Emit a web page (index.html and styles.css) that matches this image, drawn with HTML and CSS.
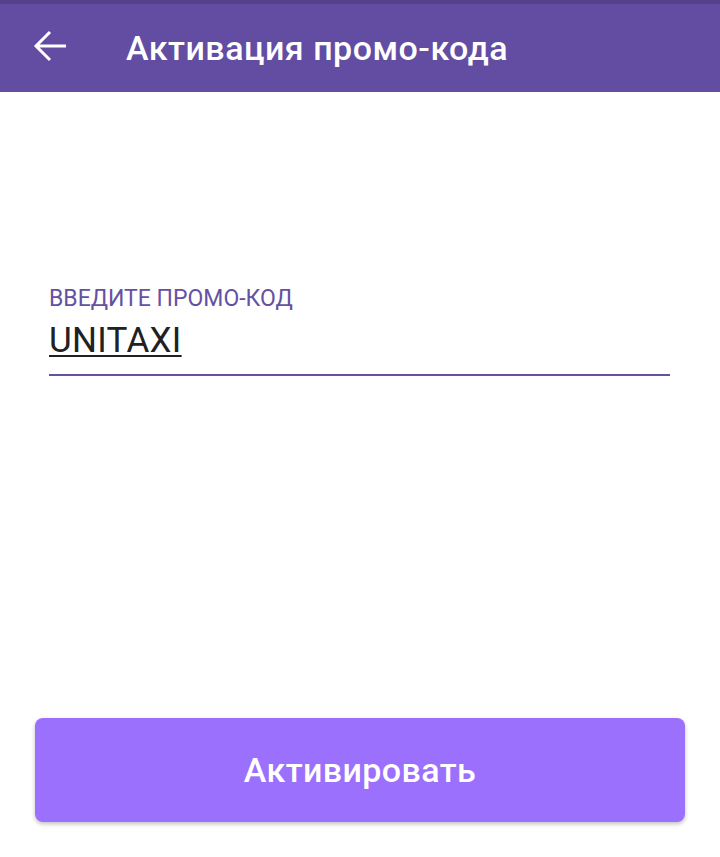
FILE: index.html
```html
<!DOCTYPE html>
<html lang="ru">
<head>
<meta charset="utf-8">
<title>Активация промо-кода</title>
<link rel="stylesheet" href="styles.css">
</head>
<body>
<div class="screen">
	<div class="statusbar"></div>
	<div class="toolbar">
		<a class="back" href="#">
			<svg width="36" height="36" viewBox="0 0 36 36">
				<path d="M33 17H4M17 3L3 17l14 14" fill="none" stroke="#fff" stroke-width="3"/>
			</svg>
		</a>
		<h1>Активация промо-кода</h1>
	</div>
	<div class="content">
		<label class="field">
			<span class="field-label">ВВЕДИТЕ ПРОМО-КОД</span>
			<span class="field-value">UNITAXI</span>
		</label>
	</div>
	<div class="actions">
		<button class="btn">Активировать</button>
	</div>
</div>
</body>
</html>
```

FILE: styles.css
```css
body{
	margin: 0;
	padding: 0;
	font-family: Roboto, "Noto Sans", sans-serif;
	background: #fff;
}
.screen{
	width: 720px;
	height: 857px;
	display: flex;
	flex-direction: column;
}
.statusbar{
	height: 4px;
	background: #54418c;
}
.toolbar{
	height: 88px;
	background: #634da3;
	display: flex;
	align-items: center;
	padding-left: 33px;
}
.back{
	display: block;
	width: 36px;
	height: 36px;
	margin-top: -2px;
}
.back svg{
	display: block;
}
.toolbar h1{
	margin: 0 0 0 57px;
	color: #fff;
	font-size: 34px;
	font-weight: 500;
	letter-spacing: 0.5px;
}
.content{
	flex: 1;
	padding: 193px 50px 0 49px;
}
.field{
	display: flex;
	flex-direction: column;
	border-bottom: 2px solid #6650a4;
	padding-bottom: 11px;
}
.field-label{
	color: #6650a4;
	font-size: 23px;
	line-height: 28px;
	margin-bottom: 6px;
}
.field-value{
	color: #212121;
	font-size: 35px;
	line-height: 44px;
	letter-spacing: 0.3px;
	text-decoration: underline;
	text-decoration-thickness: 2px;
	text-underline-offset: 3px;
}
.actions{
	padding: 0 35px 35px 35px;
}
.btn{
	display: block;
	width: 100%;
	height: 104px;
	border: 0;
	border-radius: 8px;
	background: #9b70fc;
	color: #fff;
	font-family: Roboto, "Noto Sans", sans-serif;
	font-size: 34px;
	font-weight: 500;
	letter-spacing: 0.4px;
	box-shadow: 0 2px 4px rgba(0,0,0,0.25);
}
```
